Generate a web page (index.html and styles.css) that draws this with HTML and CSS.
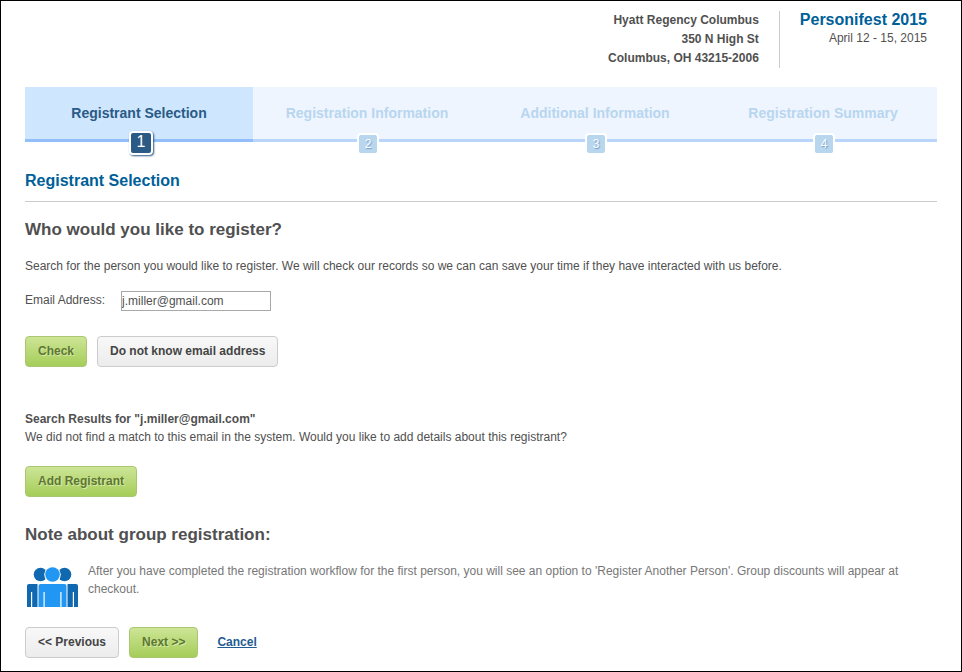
FILE: index.html
```html
<!DOCTYPE html>
<html lang="en">
<head>
    <meta charset="UTF-8">
    <meta name="viewport" content="width=device-width, initial-scale=1.0">
    <title>Personifest 2015 - Registrant Selection</title>
    <link rel="stylesheet" href="styles.css">
</head>
<body>
    <div class="page">
        <header class="event-header">
            <div class="venue">
                Hyatt Regency Columbus<br>
                350 N High St<br>
                Columbus, OH 43215-2006
            </div>
            <div class="event">
                <div class="event-name">Personifest 2015</div>
                <div class="event-date">April 12 - 15, 2015</div>
            </div>
        </header>

        <ol class="steps">
            <li class="step active">Registrant Selection<span class="step-number">1</span></li>
            <li class="step">Registration Information<span class="step-number">2</span></li>
            <li class="step">Additional Information<span class="step-number">3</span></li>
            <li class="step">Registration Summary<span class="step-number">4</span></li>
        </ol>

        <main>
            <h1>Registrant Selection</h1>

            <h2>Who would you like to register?</h2>
            <p class="intro">Search for the person you would like to register. We will check our records so we can can save your time if they have interacted with us before.</p>

            <form class="search">
                <div class="field">
                    <label for="email">Email Address:</label>
                    <input type="text" id="email" value="j.miller@gmail.com">
                </div>
                <div class="buttons">
                    <button type="button" class="button green">Check</button>
                    <button type="button" class="button">Do not know email address</button>
                </div>
            </form>

            <section class="results">
                <h3>Search Results for "j.miller@gmail.com"</h3>
                <p>We did not find a match to this email in the system. Would you like to add details about this registrant?</p>
                <button type="button" class="button green">Add Registrant</button>
            </section>

            <h2>Note about group registration:</h2>
            <div class="note">
                <!-- group of three people -->
                <svg class="group-icon" width="51" height="40" viewBox="0 0 51 40">
                    <g fill="#0f68b0">
                        <circle cx="13.5" cy="7.5" r="6.800"/>
                        <circle cx="37.5" cy="7.5" r="6.800"/>
                        <path d="M2 17H10.500V40H5.200V25H4V40H0V19Q0 17 2 17Z"/>
                        <path d="M49 17H40.500V40H45.800V25H47V40H51V19Q51 17 49 17Z"/>
                    </g>
                    <circle cx="25.500" cy="7.5" r="8.300" fill="#fff"/>
                    <circle cx="25.500" cy="7.5" r="7.300" fill="#2196f3"/>
                    <path fill="#2196f3" d="M13.500 17H37.500Q39.500 17 39.500 19V40H34.500V25H33.300V40H17.700V25H16.500V40H11.500V19Q11.500 17 13.500 17Z"/>
                </svg>
                <p>After you have completed the registration workflow for the first person, you will see an option to 'Register Another Person'. Group discounts will appear at checkout.</p>
            </div>

            <div class="buttons">
                <button type="button" class="button">&lt;&lt; Previous</button>
                <button type="button" class="button green">Next &gt;&gt;</button>
                <a href="#" class="cancel">Cancel</a>
            </div>
        </main>
    </div>
</body>
</html>
```
FILE: styles.css
```css
* {
    box-sizing: border-box;
}

body {
    margin: 0;
    font-family: Arial, "Liberation Sans", sans-serif;
    font-size: 12px;
    line-height: 18px;
    color: #505050;
    background-color: #fff;
}

h1, h2, h3, p {
    margin: 0;
}

.page {
    min-height: 100vh;
    padding: 10px 24px 12px;
    border: 1px solid #000;
}

/* Venue and event details */
.event-header {
    display: flex;
    justify-content: flex-end;
    padding-right: 10px;
    text-align: right;
}

.venue {
    padding-right: 20px;
    border-right: 1px solid #ccc;
    font-weight: bold;
    line-height: 19px;
}

.event {
    padding-left: 20px;
}

.event-name {
    font-size: 16px;
    font-weight: bold;
    color: #005f98;
}

/* Progress bar */
.steps {
    display: flex;
    margin: 19px 0 0;
    padding: 0;
    list-style: none;
}

.step {
    position: relative;
    flex: 1;
    height: 55px;
    padding-top: 17px;
    border-bottom: 3px solid #b9d5fb;
    background-color: #eef5ff;
    color: #b9d6ef;
    font-size: 14px;
    font-weight: bold;
    text-align: center;
}

.step.active {
    border-bottom-color: #92bffb;
    background-color: #cfe6ff;
    color: #2a5a85;
}

.step-number {
    position: absolute;
    left: 50%;
    bottom: -16px;
    width: 22px;
    height: 22px;
    margin-left: -10px;
    border: 2px solid #fff;
    border-radius: 4px;
    background-color: #b9d6ef;
    color: #fff;
    font-size: 12px;
    font-weight: normal;
    line-height: 18px;
    text-shadow: 1px 1px 1px #6c9cc4;
}

.step.active .step-number {
    width: 24px;
    height: 24px;
    background-color: #2a5a85;
    box-shadow: 1px 1px 2px #2a5a85;
    font-size: 16px;
    text-shadow: none;
}

/* Content */
h1 {
    margin-top: 30px;
    padding-bottom: 11px;
    border-bottom: 1px solid #ccc;
    color: #005f98;
    font-size: 16px;
}

h2 {
    margin-top: 19px;
    font-size: 17px;
}

h3 {
    font-size: 12px;
}

.intro {
    margin-top: 18px;
}

.field {
    display: flex;
    gap: 16px;
    margin-top: 16px;
}

.field input {
    width: 150px;
    height: 20px;
    padding: 0;
    border: 1px solid #a9a9a9;
    font-family: inherit;
    font-size: 12px;
    color: #505050;
}

.buttons {
    display: flex;
    align-items: center;
    gap: 10px;
}

.search .buttons {
    margin-top: 25px;
}

.button {
    height: 31px;
    padding: 0 12px 2px;
    border: 1px solid #ccc;
    border-radius: 4px;
    background: linear-gradient(#f8f8f8, #ececec);
    color: #444;
    font-family: inherit;
    font-size: 12px;
    font-weight: bold;
}

.button.green {
    border-color: #a9c671;
    background: linear-gradient(#cde596, #a5cd59);
    color: #5d7731;
    text-shadow: 1px 1px 0 #d5e9a9;
}

.results {
    margin-top: 43px;
}

.results .button {
    margin-top: 20px;
}

.results + h2 {
    margin-top: 29px;
}

.note {
    display: flex;
    gap: 10px;
    margin: 18px 0 20px 2px;
    color: #777;
}

.group-icon {
    flex: none;
    margin-top: 5px;
}

.cancel {
    margin-left: 9px;
    padding-bottom: 2px;
    color: #1e5c93;
    font-weight: bold;
}
```
